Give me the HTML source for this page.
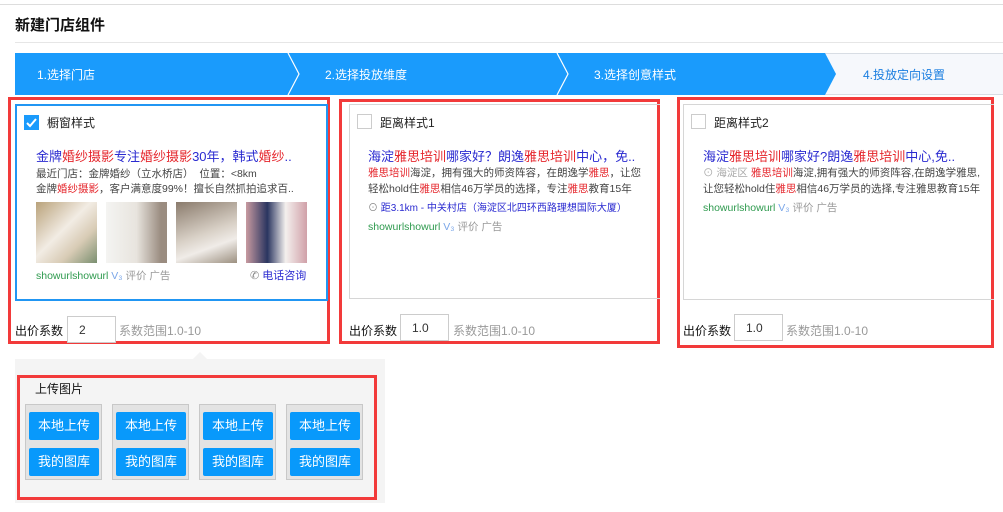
<!DOCTYPE html>
<html><head><meta charset="utf-8"><style>
*{margin:0;padding:0;box-sizing:border-box}
body{width:1003px;height:512px;background:#fff;font-family:"Liberation Sans","Noto Sans CJK SC",sans-serif;position:relative;overflow:hidden;color:#333}
.a{position:absolute;white-space:nowrap}
.r{color:#e5262c}.b{color:#2a2ad0}
.red{position:absolute;border:3px solid #f23a3a}
.t{font-size:13px;color:#2a2ad0}
.s{font-size:10.5px;color:#444}
.g{color:#2e9a4e;font-size:10.5px}
.gr{color:#999;font-size:10.5px}
.cb{position:absolute;width:15px;height:15px;border:1px solid #ccc;background:#fff}
.in{position:absolute;width:49px;height:27px;border:1px solid #ccc;background:#fff;font-size:12px;color:#333;padding:6px 0 0 11px}
.tile{position:absolute;top:404px;width:77px;height:76px;background:#e3e3e3;border:1px solid #c8c8c8}
.btn{position:absolute;left:3px;width:70px;height:28px;background:#0899fb;border-radius:2px;color:#fff;font-size:13px;text-align:center;line-height:28px}
</style></head><body>
<div class="a" style="left:0;top:4px;width:1003px;height:1px;background:#ddd"></div>
<div class="a" style="left:15px;top:14px;font-size:15px;font-weight:bold;color:#111">新建门店组件</div>
<div class="a" style="left:15px;top:42px;width:988px;height:1px;background:#e6e6e6"></div>
<svg class="a" style="left:15px;top:53px" width="988" height="42">
<rect x="0.5" y="0.5" width="990" height="41" fill="#f6f8fc" stroke="#d8dde4"/>
<polygon points="0,0 810,0 821,21 810,42 0,42" fill="#1a9bfc"/>
<polyline points="273,0 284,21 273,42" fill="none" stroke="#fff" stroke-width="1.2"/>
<polyline points="542,0 553,21 542,42" fill="none" stroke="#fff" stroke-width="1.2"/>
</svg>
<div class="a" style="left:37px;top:66px;font-size:12px;color:#fff">1.选择门店</div>
<div class="a" style="left:325px;top:66px;font-size:12px;color:#fff">2.选择投放维度</div>
<div class="a" style="left:594px;top:66px;font-size:12px;color:#fff">3.选择创意样式</div>
<div class="a" style="left:863px;top:66px;font-size:12px;color:#1a7ee0">4.投放定向设置</div>

<!-- card 1 -->
<div class="red" style="left:8px;top:97px;width:322px;height:247px"></div>
<div class="a" style="left:15px;top:104px;width:313px;height:197px;border:2px solid #2196f3"></div>
<div class="cb" style="left:24px;top:115px;background:#1a9bfc;border-color:#1a9bfc"><svg width="13" height="13" style="position:absolute;left:0;top:0"><polyline points="2,7 5,10 11,3" fill="none" stroke="#fff" stroke-width="2"/></svg></div>
<div class="a" style="left:47px;top:114px;font-size:12px;color:#222">橱窗样式</div>
<div class="a t" style="left:36px;top:146px">金牌<span class="r">婚纱摄影</span>专注<span class="r">婚纱摄影</span>30年，韩式<span class="r">婚纱</span>..</div>
<div class="a s" style="left:36px;top:166px">最近门店：金牌婚纱（立水桥店）&nbsp;&nbsp;位置：&lt;8km</div>
<div class="a s" style="left:36px;top:181px">金牌<span class="r">婚纱摄影</span>，客户满意度99%！擅长自然抓拍追求百..</div>
<div class="a" style="left:36px;top:202px;width:61px;height:61px;background:linear-gradient(135deg,#b9a27a,#f2ece4 45%,#d8cbb5 70%,#7a8f70)"></div>
<div class="a" style="left:106px;top:202px;width:61px;height:61px;background:linear-gradient(90deg,#f4f4f2,#e8e4de 50%,#9a8c80 90%)"></div>
<div class="a" style="left:176px;top:202px;width:61px;height:61px;background:linear-gradient(160deg,#8a7b6c,#d8d0c6 50%,#f0ece8 70%,#9c9080)"></div>
<div class="a" style="left:246px;top:202px;width:61px;height:61px;background:linear-gradient(90deg,#c89aa0,#2a3560 35%,#f4f0ee 65%,#d0a0a8)"></div>
<div class="a g" style="left:36px;top:268px">showurlshowurl <span style="color:#7aa6e8">V₃</span> <span class="gr">评价 广告</span></div>
<div class="a" style="left:250px;top:267px;font-size:11px;color:#2a2ad0"><span style="color:#888">✆</span> 电话咨询</div>
<div class="a" style="left:15px;top:322px;font-size:12px;color:#111">出价系数</div>
<div class="in" style="left:67px;top:316px">2</div>
<div class="a" style="left:119px;top:322px;font-size:12px;color:#999">系数范围1.0-10</div>

<!-- card 2 -->
<div class="red" style="left:339px;top:99px;width:321px;height:245px"></div>
<div class="a" style="left:349px;top:104px;width:311px;height:195px;border:1px solid #d6d6d6;border-right:none"></div>
<div class="cb" style="left:357px;top:114px"></div>
<div class="a" style="left:380px;top:114px;font-size:12px;color:#222">距离样式1</div>
<div class="a t" style="left:368px;top:146px">海淀<span class="r">雅思培训</span>哪家好？朗逸<span class="r">雅思培训</span>中心，免..</div>
<div class="a s" style="left:368px;top:165px"><span class="r">雅思培训</span>海淀，拥有强大的师资阵容，在朗逸学<span class="r">雅思</span>，让您</div>
<div class="a s" style="left:368px;top:181px">轻松hold住<span class="r">雅思</span>相信46万学员的选择，专注<span class="r">雅思</span>教育15年</div>
<div class="a" style="left:368px;top:199px;font-size:10px;color:#2a2ad0"><span style="color:#888">⊙</span> 距3.1km - 中关村店（海淀区北四环西路理想国际大厦）</div>
<div class="a g" style="left:368px;top:219px">showurlshowurl <span style="color:#7aa6e8">V₃</span> <span class="gr">评价 广告</span></div>
<div class="a" style="left:349px;top:322px;font-size:12px;color:#111">出价系数</div>
<div class="in" style="left:400px;top:314px">1.0</div>
<div class="a" style="left:453px;top:322px;font-size:12px;color:#999">系数范围1.0-10</div>

<!-- card 3 -->
<div class="red" style="left:677px;top:97px;width:317px;height:251px"></div>
<div class="a" style="left:683px;top:104px;width:311px;height:196px;border:1px solid #d6d6d6;border-right:none"></div>
<div class="cb" style="left:691px;top:114px"></div>
<div class="a" style="left:714px;top:114px;font-size:12px;color:#222">距离样式2</div>
<div class="a t" style="left:703px;top:146px">海淀<span class="r">雅思培训</span>哪家好?朗逸<span class="r">雅思培训</span>中心,免..</div>
<div class="a s" style="left:703px;top:165px"><span style="color:#aaa">⊙ 海淀区</span> <span class="r">雅思培训</span>海淀,拥有强大的师资阵容,在朗逸学雅思,</div>
<div class="a s" style="left:703px;top:181px">让您轻松hold住<span class="r">雅思</span>相信46万学员的选择,专注雅思教育15年</div>
<div class="a g" style="left:703px;top:200px">showurlshowurl <span style="color:#7aa6e8">V₃</span> <span class="gr">评价 广告</span></div>
<div class="a" style="left:683px;top:322px;font-size:12px;color:#111">出价系数</div>
<div class="in" style="left:734px;top:314px">1.0</div>
<div class="a" style="left:786px;top:322px;font-size:12px;color:#999">系数范围1.0-10</div>

<!-- upload -->
<div class="a" style="left:15px;top:359px;width:370px;height:144px;background:#f4f4f4"></div>
<div class="a" style="left:193px;top:352px;width:0;height:0;border:7px solid transparent;border-bottom-color:#f4f4f4;border-top:none"></div>
<div class="red" style="left:17px;top:375px;width:360px;height:125px"></div>
<div class="a" style="left:35px;top:380px;font-size:12px;color:#111">上传图片</div>
<div class="tile" style="left:25px"><div class="btn" style="top:7px">本地上传</div><div class="btn" style="top:43px">我的图库</div></div>
<div class="tile" style="left:112px"><div class="btn" style="top:7px">本地上传</div><div class="btn" style="top:43px">我的图库</div></div>
<div class="tile" style="left:199px"><div class="btn" style="top:7px">本地上传</div><div class="btn" style="top:43px">我的图库</div></div>
<div class="tile" style="left:286px"><div class="btn" style="top:7px">本地上传</div><div class="btn" style="top:43px">我的图库</div></div>
</body></html>
